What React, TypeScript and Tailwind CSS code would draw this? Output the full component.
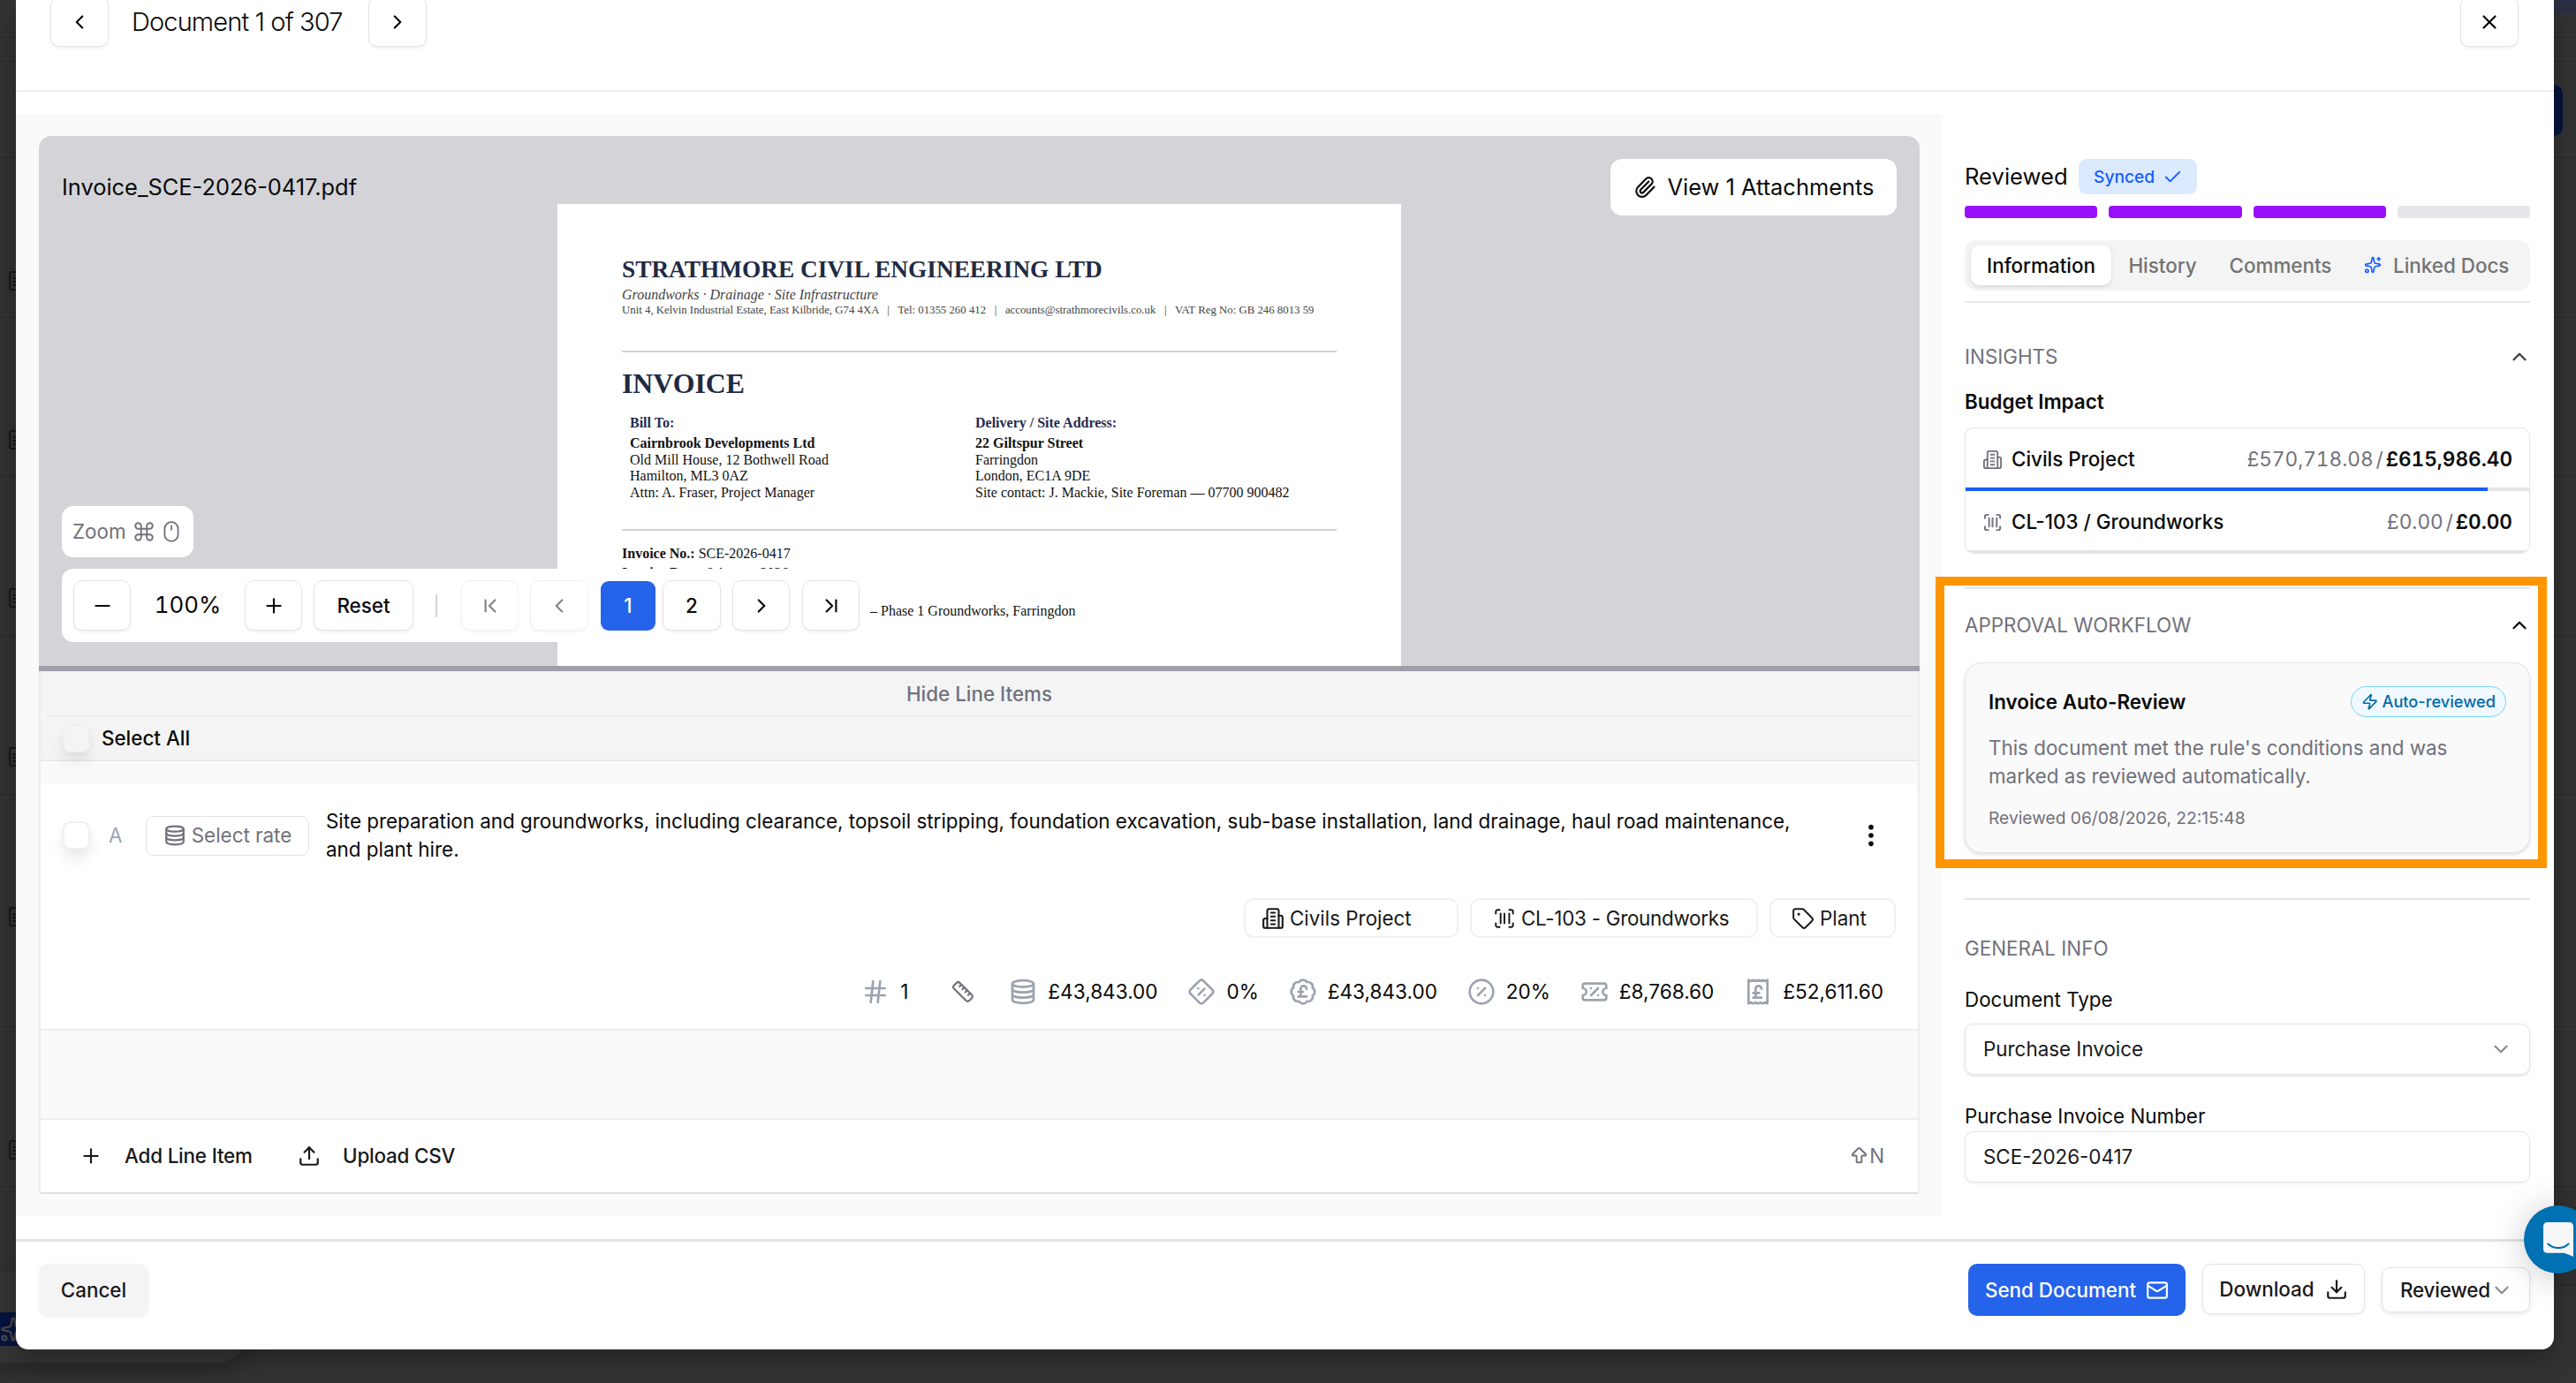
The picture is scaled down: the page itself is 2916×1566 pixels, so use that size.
import type { ReactNode } from 'react';
import {
  ArrowBigUp,
  BadgePoundSterling,
  Check,
  ChevronDown,
  ChevronFirst,
  ChevronLast,
  ChevronLeft,
  ChevronRight,
  ChevronUp,
  CirclePercent,
  Command,
  DiamondPercent,
  Download,
  EllipsisVertical,
  FileText,
  Hash,
  Mail,
  Minus,
  Mouse,
  Paperclip,
  Plus,
  ReceiptPoundSterling,
  Ruler,
  ScanBarcode,
  Sparkles,
  Tag,
  TicketPercent,
  Upload,
  X,
  Zap,
} from 'lucide-react';
import { clsx } from 'clsx';

interface IconProps {
  className?: string;
}

function BuildingIcon({ className }: IconProps) {
  return (
    <svg viewBox="0 0 24 24" fill="none" stroke="currentColor" strokeWidth="1.9" strokeLinecap="round" strokeLinejoin="round" className={className}>
      <path d="M6 22V4a2 2 0 0 1 2-2h8a2 2 0 0 1 2 2v18Z" />
      <path d="M6 12H4a2 2 0 0 0-2 2v6a2 2 0 0 0 2 2h2" />
      <path d="M18 9h2a2 2 0 0 1 2 2v9a2 2 0 0 1-2 2h-2" />
      <path d="M10 6h4M10 10h4M10 14h4M10 18h4" />
    </svg>
  );
}

function CoinStackIcon({ className }: IconProps) {
  return (
    <svg viewBox="0 0 24 24" fill="none" stroke="currentColor" strokeWidth="2" strokeLinecap="round" className={className}>
      <ellipse cx="12" cy="5.2" rx="9" ry="2.8" />
      <path d="M3 5.2v13.600c0 1.600 4 2.800 9 2.800s9-1.200 9-2.800V5.200" />
      <path d="M3 9.700c0 1.600 4 2.800 9 2.800s9-1.200 9-2.800" />
      <path d="M3 14.200c0 1.600 4 2.800 9 2.800s9-1.200 9-2.800" />
    </svg>
  );
}

interface OutlineButtonProps {
  className?: string;
  disabled?: boolean;
  children: ReactNode;
}

function OutlineButton({ className, disabled, children }: OutlineButtonProps) {
  return (
    <button
      disabled={disabled}
      className={clsx(
        'flex h-[57px] shrink-0 items-center justify-center rounded-[10px] border border-[#e4e4e7] bg-white font-medium shadow-[0_2px_3px_rgba(0,0,0,0.06)]',
        disabled && 'opacity-50',
        className,
      )}
    >
      {children}
    </button>
  );
}

// Dimmed page that stays visible round the edges of the dialog
function Backdrop() {
  const rows = [27, 109, 181, 180, 180, 180, 263, 181, 111];

  return (
    <div className="absolute inset-0 overflow-hidden bg-[#333333]">
      <div className="flex flex-col">
        <div className="h-[43px] border-b border-[#292929]" />
        {rows.map((height, i) => (
          <div key={i} className="border-b border-[#292929]" style={{ height }} />
        ))}
      </div>
      <div className="absolute top-[1440px] -left-10 h-[103px] w-[318px] rounded-br-[32px] bg-[#353535] shadow-[0_10px_30px_rgba(0,0,0,0.25)]" />
      <div className="absolute top-[1486px] left-0 flex h-[38px] w-6 items-center bg-[#07133f]">
        <Sparkles className="h-[30px] w-[30px] shrink-0 text-[#4b4b4b]" strokeWidth={1.8} />
      </div>
      {[318, 498, 677, 857, 1038, 1302].map((y) => (
        <FileText key={y} className="absolute left-[7px] h-6 w-6 -translate-y-1/2 text-[#171717]" style={{ top: y }} />
      ))}
      <div className="absolute top-0 right-0 h-[15px] w-[26px] bg-[#2b2f42]" />
      <div className="absolute top-[96px] right-[15px] h-[58px] w-[40px] rounded-[10px] bg-[#06143c]" />
    </div>
  );
}

function DialogHeader() {
  return (
    <header className="flex h-[104px] items-start border-b-2 border-[#ededee] pr-[40px] pl-[39px]">
      <OutlineButton className="-mt-[4px] w-[66px]">
        <ChevronLeft className="h-[26px] w-[26px]" />
      </OutlineButton>
      <h1 className="ml-[26px] w-[268px] text-[29px] leading-[50px] font-[350] tracking-[-0.030em] whitespace-nowrap">Document 1 of 307</h1>
      <OutlineButton className="-mt-[4px] w-[66px]">
        <ChevronRight className="h-[26px] w-[26px]" />
      </OutlineButton>
      <OutlineButton className="-mt-[4px] ml-auto w-[66px]">
        <X className="h-[26px] w-[26px]" />
      </OutlineButton>
    </header>
  );
}

function InvoicePage() {
  return (
    <div className="mt-[77px] ml-[587px] h-[600px] w-[955px] bg-white px-[73px] pt-[54px] font-['Liberation_Serif',serif] text-[16px] text-[#111111]">
      <div className="h-[40px] text-[27.3px] leading-[40px] font-bold whitespace-nowrap text-[#1f2a44]">STRATHMORE CIVIL ENGINEERING LTD</div>
      <div className="h-[18px] leading-[18px] text-[#444444] italic">Groundworks · Drainage · Site Infrastructure</div>
      <div className="h-[17px] text-[12.82px] leading-[17px] whitespace-pre text-[#444444]">
        {'Unit 4, Kelvin Industrial Estate, East Kilbride, G74 4XA   |   Tel: 01355 260 412   |   accounts@strathmorecivils.co.uk   |   VAT Reg No: GB 246 8013 59'}
      </div>
      <div className="mt-[37px] h-[2px] bg-[#cdd1dc]" />
      <div className="mt-[16px] h-[40px] text-[31.8px] leading-[40px] font-bold text-[#1f2a44]">INVOICE</div>
      <div className="mt-[14px] flex pl-[9px] leading-[18.6px]">
        <div className="w-[391px]">
          <div className="mb-[4px] leading-[20px] font-bold text-[#1f2a50]">Bill To:</div>
          <div className="font-bold">Cairnbrook Developments Ltd</div>
          <div>Old Mill House, 12 Bothwell Road</div>
          <div>Hamilton, ML3 0AZ</div>
          <div>Attn: A. Fraser, Project Manager</div>
        </div>
        <div>
          <div className="mb-[4px] leading-[20px] font-bold text-[#1f2a50]">Delivery / Site Address:</div>
          <div className="font-bold">22 Giltspur Street</div>
          <div>Farringdon</div>
          <div>London, EC1A 9DE</div>
          <div className="whitespace-nowrap">Site contact: J. Mackie, Site Foreman — 07700 900482</div>
        </div>
      </div>
      <div className="mt-[32px] h-[2px] bg-[#cdd1dc]" />
      <div className="mt-[15px] leading-[21.8px]">
        <div>
          <b>Invoice No.:</b> SCE-2026-0417
        </div>
        <div>
          <b>Invoice Date:</b> 6 August 2026
        </div>
        <div className="mt-[21px] pl-[281px]">– Phase 1 Groundworks, Farringdon</div>
      </div>
    </div>
  );
}

function DocumentPreview() {
  return (
    <div className="relative h-[600px] overflow-hidden rounded-t-[14px] bg-[#d4d4d8]">
      <InvoicePage />

      <div className="absolute top-[26px] right-[26px] left-[26px] flex h-[64px] items-center justify-between text-[25.4px]">
        <span>Invoice_SCE-2026-0417.pdf</span>
        <button className="flex h-[64px] w-[324px] items-center justify-center rounded-[13px] bg-white">
          <Paperclip className="mr-[13px] h-[26px] w-[26px]" />
          View 1 Attachments
        </button>
      </div>

      <div className="absolute bottom-[27px] left-[26px] flex flex-col items-start gap-[13px]">
        <div className="flex h-[58px] w-[149px] items-center rounded-[13px] bg-white pl-[12px] text-[22.4px] text-[#71717b]">
          Zoom
          <Command className="ml-[7px] h-[26px] w-[26px]" strokeWidth={1.8} />
          <Mouse className="ml-[5px] h-[26px] w-[26px]" strokeWidth={1.7} />
        </div>
        <div className="flex h-[83px] w-[913px] items-center rounded-[13px] bg-white pl-[13px]">
          <OutlineButton className="w-[65px]">
            <Minus className="h-[26px] w-[26px]" />
          </OutlineButton>
          <span className="w-[129px] text-center text-[25.8px] tabular-nums">100%</span>
          <OutlineButton className="w-[65px]">
            <Plus className="h-[26px] w-[26px]" />
          </OutlineButton>
          <OutlineButton className="ml-[13px] w-[113px]">Reset</OutlineButton>
          <span className="mr-[27px] ml-[25px] h-[26px] w-[2px] bg-[#d4d4d8]" />
          <OutlineButton className="w-[65px]" disabled>
            <ChevronFirst className="h-[26px] w-[26px]" />
          </OutlineButton>
          <OutlineButton className="ml-[13px] w-[66px]" disabled>
            <ChevronLeft className="h-[26px] w-[26px]" />
          </OutlineButton>
          <button className="ml-[14px] h-[56px] w-[62px] rounded-[9px] bg-[#2563eb] font-medium text-white">1</button>
          <OutlineButton className="ml-[8px] w-[66px]">2</OutlineButton>
          <OutlineButton className="ml-[13px] w-[65px]">
            <ChevronRight className="h-[26px] w-[26px]" />
          </OutlineButton>
          <OutlineButton className="ml-[14px] w-[65px]">
            <ChevronLast className="h-[26px] w-[26px]" />
          </OutlineButton>
        </div>
      </div>
    </div>
  );
}

function Checkbox() {
  return <span className="h-[32px] w-[31px] shrink-0 rounded-[9px] border-2 border-[#eff0f5] shadow-[0_12px_18px_rgba(0,0,0,0.07),0_3px_6px_rgba(0,0,0,0.04)]" />;
}

interface MetricProps {
  icon: ReactNode;
  value: string;
}

function Metric({ icon, value }: MetricProps) {
  return (
    <div className="flex items-center gap-[12px] text-[22.6px]">
      <span className="text-[#9ca3af] [&>svg]:h-[32px] [&>svg]:w-[32px]">{icon}</span>
      {value}
    </div>
  );
}

function LineItem() {
  return (
    <div className="flex h-[279px] flex-col border-b-2 border-[#ededee] bg-white pr-[25px] pl-[25px]">
      <div className="mt-[26px] flex h-[64px] items-center">
        <Checkbox />
        <span className="ml-[21px] w-[42px] text-[#9ca3af]">A</span>
        <button className="flex h-[45px] w-[185px] items-center justify-center rounded-[9px] border border-[#e4e4e7] text-[#71717b]">
          <CoinStackIcon className="mr-[6px] h-[26px] w-[26px]" />
          Select rate
        </button>
        <p className="ml-[19px] w-[1690px] leading-[32.3px]">
          Site preparation and groundworks, including clearance, topsoil stripping, foundation excavation, sub-base installation, land drainage, haul road
          maintenance,
          <br />
          and plant hire.
        </p>
        <EllipsisVertical className="ml-auto h-[32px] w-[32px] translate-x-[-12px]" strokeWidth={2.2} />
      </div>

      <div className="mt-[39px] flex h-[45px] justify-end gap-[13px] text-[#18181b]">
        <div className="flex w-[243px] items-center rounded-[11px] border-2 border-[#f1f1f2] pl-[18px]">
          <BuildingIcon className="mr-[6px] h-[26px] w-[26px]" />
          Civils Project
        </div>
        <div className="flex w-[326px] items-center rounded-[11px] border-2 border-[#f1f1f2] pl-[24px] tracking-[-0.012em]">
          <ScanBarcode className="mr-[6px] h-[26px] w-[26px]" strokeWidth={1.8} />
          CL-103 - Groundworks
        </div>
        <div className="flex w-[143px] items-center rounded-[11px] border-2 border-[#f1f1f2] pl-[23px]">
          <Tag className="mr-[6px] h-[26px] w-[26px]" strokeWidth={1.8} />
          Plant
        </div>
      </div>

      <div className="mt-[45px] flex h-[32px] items-center justify-end gap-[33.8px] pr-[14px]">
        <div className="flex items-center gap-[39px]">
          <div className="mr-[9px]">
            <Metric icon={<Hash />} value="1" />
          </div>
          <Ruler className="mr-[6px] h-[26px] w-[26px] text-[#71717b]" />
        </div>
        <Metric icon={<CoinStackIcon />} value="£43,843.00" />
        <Metric icon={<DiamondPercent />} value="0%" />
        <Metric icon={<BadgePoundSterling />} value="£43,843.00" />
        <Metric icon={<CirclePercent />} value="20%" />
        <Metric icon={<TicketPercent />} value="£8,768.60" />
        <Metric icon={<ReceiptPoundSterling />} value="£52,611.60" />
      </div>
    </div>
  );
}

function LineItems() {
  return (
    <div className="flex h-[592px] flex-col rounded-b-[4px] border-x-2 border-b-2 border-[#ededee] border-b-[#dfdfe0]">
      <button className="h-[50px] bg-[#f4f4f4] pt-px font-medium text-[#71717b]">Hide Line Items</button>
      <div className="flex h-[52px] items-center rounded-t-[9px] border-t border-b-2 border-[#e9e9ea] bg-[#f4f4f4] pl-[25px] font-medium">
        <Checkbox />
        <span className="ml-[13px]">Select All</span>
      </div>
      <div className="h-[26px]" />
      <LineItem />
      <div className="flex-1" />
      <div className="flex h-[84px] items-center border-t-2 border-[#ededee] bg-white pr-[38px] pl-[44px] font-medium text-[#18181b]">
        <Plus className="h-[26px] w-[26px]" />
        <span className="ml-[25px] w-[196px] tracking-[-0.008em]">Add Line Item</span>
        <Upload className="h-[26px] w-[26px]" />
        <span className="ml-[25px] tracking-[-0.008em]">Upload CSV</span>
        <span className="ml-auto flex items-center font-normal text-[#71717b]">
          <ArrowBigUp className="h-[23px] w-[23px]" />N
        </span>
      </div>
    </div>
  );
}

interface SectionTitleProps {
  title: string;
  chevron?: string;
}

function SectionTitle({ title, chevron }: SectionTitleProps) {
  return (
    <div className="flex h-[32px] items-center justify-between text-[#71717b]">
      {title}
      {chevron && <ChevronUp className={clsx('h-[26px] w-[26px] translate-x-px', chevron)} strokeWidth={2.2} />}
    </div>
  );
}

interface BudgetRowProps {
  icon: ReactNode;
  name: string;
  spent: string;
  total: string;
  percent: number;
}

function BudgetRow({ icon, name, spent, total, percent }: BudgetRowProps) {
  return (
    <div className="h-[71px]">
      <div className="flex h-[67px] items-center pt-[3px] pr-[19px] pl-[19px]">
        <span className="mr-[10px] text-[#71717b] [&>svg]:h-[23px] [&>svg]:w-[23px]">{icon}</span>
        <span className="font-medium">{name}</span>
        <span className="ml-auto text-[22.6px] tabular-nums">
          <span className="text-[#71717b]">{spent}</span>
          <span className="mx-[3px] text-[#71717b]">/</span>
          <span className="font-semibold">{total}</span>
        </span>
      </div>
      <div className="h-[4px] bg-[#e4e4e7]">
        <div className="h-full bg-[#155dfc]" style={{ width: `${percent}%` }} />
      </div>
    </div>
  );
}

function Sidebar() {
  return (
    <aside className="flex w-[692px] flex-col pr-[27px] pl-[25px]">
      <div className="mt-[51px] flex h-[40px] items-center">
        <span className="text-[25.6px]">Reviewed</span>
        <span className="ml-auto flex h-[40px] w-[134px] items-center rounded-[9px] bg-[#dbeafe] pl-[17px] text-[19.2px] font-medium text-[#155dfc]">
          Synced
          <Check className="ml-[9px] h-[23px] w-[23px]" strokeWidth={1.9} />
        </span>
        <span className="w-[377px]" />
      </div>
      <div className="mt-[13px] grid h-[14px] grid-cols-4 gap-[13px]">
        <span className="rounded-[4px] bg-[#9810fa]" />
        <span className="rounded-[4px] bg-[#9810fa]" />
        <span className="rounded-[4px] bg-[#9810fa]" />
        <span className="rounded-[4px] bg-[#e5e7eb]" />
      </div>

      <nav className="mt-[25px] flex h-[57px] items-center rounded-[13px] bg-[#f4f4f5] px-[7px] font-medium text-[#737373]">
        <button className="h-[45px] w-[159px] rounded-[10px] bg-white text-[#0a0a0a] shadow-[0_2px_4px_rgba(0,0,0,0.12)]">Information</button>
        <button className="w-[116px]">History</button>
        <button className="w-[151px]">Comments</button>
        <button className="ml-[19px] flex items-center">
          <Sparkles className="mr-[13px] h-[20px] w-[20px] text-[#155dfc]" />
          Linked Docs
        </button>
      </nav>
      <div className="mt-[12px] h-[2px] bg-[#e9e9ea]" />

      <div className="mt-[45px]">
        <SectionTitle title="INSIGHTS" chevron="text-[#3f3f46]" />
      </div>
      <h3 className="mt-[19px] leading-[32px] font-semibold">Budget Impact</h3>
      <div className="mt-[13px] h-[143px] overflow-hidden rounded-[10px] border border-[#e4e4e7]">
        <BudgetRow icon={<BuildingIcon />} name="Civils Project" spent="£570,718.08" total="£615,986.40" percent={92.6} />
        <BudgetRow icon={<ScanBarcode />} name="CL-103 / Groundworks" spent="£0.00" total="£0.00" percent={0} />
      </div>

      <div className="mt-[38px] mb-px h-[2px] bg-[#e4e4e5]" />
      <div className="mt-[24px]">
        <SectionTitle title="APPROVAL WORKFLOW" chevron="text-[#0a0a0a]" />
      </div>
      <div className="mt-[26px] h-[216px] rounded-[19px] border border-[#e4e4e7] bg-[#fafafa] px-[26px] pt-[26px] shadow-[0_2px_4px_rgba(0,0,0,0.12)]">
        <div className="flex h-[35px] items-center justify-between">
          <span className="font-semibold">Invoice Auto-Review</span>
          <span className="flex h-[35px] w-[176px] items-center justify-center rounded-full border border-[#74d4ff] bg-[#f0f9ff] text-[18.2px] font-medium text-[#0069a8]">
            <Zap className="mr-[4px] h-[19.4px] w-[19.4px]" />
            Auto-reviewed
          </span>
        </div>
        <p className="mt-[19px] leading-[32.3px] text-[#71717b]">
          This document met the rule's conditions and was
          <br />
          marked as reviewed automatically.
        </p>
        <p className="mt-[17px] text-[19.2px] leading-[26px] text-[#71717b]">Reviewed 06/08/2026, 22:15:48</p>
      </div>

      <div className="mt-[51px] mb-px h-[2px] bg-[#e4e4e5]" />
      <div className="mt-[38px]">
        <SectionTitle title="GENERAL INFO" />
      </div>
      <label className="mt-[26px] leading-[32px]">Document Type</label>
      <div className="mt-[11px] flex h-[58px] items-center justify-between rounded-[10px] border border-[#e4e4e7] pr-[19px] pl-[20px] text-[#18181b] shadow-[0_2px_3px_rgba(0,0,0,0.1)]">
        Purchase Invoice
        <ChevronDown className="h-[26px] w-[26px] text-[#8b8b8b]" />
      </div>
      <label className="mt-[31px] leading-[32px]">Purchase Invoice Number</label>
      <div className="mt-px flex h-[58px] items-center rounded-[10px] border border-[#e4e4e7] pl-[20px] text-[#18181b] shadow-[0_2px_3px_rgba(0,0,0,0.05)]">
        SCE-2026-0417
      </div>
    </aside>
  );
}

function DialogFooter() {
  return (
    <footer className="flex h-[125px] items-start border-t-3 border-[#e2e2e3] pt-[25px] pr-[27px] pl-[26px] font-medium">
      <button className="h-[60px] w-[124px] rounded-[10px] bg-[#f4f4f5] text-[#18181b] shadow-[0_1px_3px_rgba(0,0,0,0.06)]">Cancel</button>
      <button className="ml-auto flex h-[59px] w-[246px] items-center justify-center rounded-[10px] bg-[#2563eb] text-white">
        Send Document
        <Mail className="ml-[11px] h-[26px] w-[26px]" />
      </button>
      <OutlineButton className="ml-[19px] w-[184px] text-[#18181b]">
        Download
        <Download className="ml-[12px] h-[26px] w-[26px]" />
      </OutlineButton>
      <div className="mt-[4px] ml-[19px] flex h-[51px] w-[168px] items-center rounded-[10px] border border-[#e4e4e7] pl-[20px] tracking-[-0.008em] text-[#18181b] shadow-[0_2px_4px_rgba(0,0,0,0.1)]">
        Reviewed
        <ChevronDown className="h-[26px] w-[26px] text-[#8b8b8b]" />
      </div>
    </footer>
  );
}

function ChatLauncher() {
  return (
    <div className="absolute top-[1365px] left-[2857px] flex h-[77px] w-[77px] items-center justify-center rounded-full bg-[#0071b2] shadow-[0_4px_40px_rgba(0,0,0,0.22)]">
      <svg viewBox="0 0 28 32" className="h-[39px] w-[34px]">
        <path
          fill="#f7f7f7"
          d="M28 32s-4.700-1.900-8.500-3.400H3.500C1.600 28.600 0 27 0 25V3.600C0 1.600 1.600 0 3.500 0h21C26.400 0 28 1.600 28 3.600V32z"
        />
        <path d="M4.500 20.200c5 5 14 5 19 0" fill="none" stroke="#0071b2" strokeWidth="1.8" strokeLinecap="round" />
      </svg>
    </div>
  );
}

export default function App() {
  return (
    <div className="relative h-[1566px] w-[2916px] overflow-hidden font-['Inter',sans-serif] text-[22.4px] text-[#0a0a0a]">
      <Backdrop />
      <div role="dialog" className="relative ml-[18px] flex h-[1528px] w-[2873px] flex-col rounded-b-[14px] bg-white shadow-[0_10px_30px_rgba(0,0,0,0.3)]">
        <DialogHeader />
        <div className="mt-[25px] mb-[26px] flex h-[1248px]">
          <main className="w-[2181px] bg-[#fafafa] pt-[25px] pr-[26px] pl-[26px]">
            <DocumentPreview />
            <div className="h-[6px] bg-[#9f9fa9]" />
            <LineItems />
          </main>
          <Sidebar />
        </div>
        <DialogFooter />
      </div>
      {/* highlight round the approval workflow section */}
      <div className="absolute top-[653px] left-[2191px] h-[330px] w-[692px] border-10 border-[#ff9500]" />
      <ChatLauncher />
    </div>
  );
}
